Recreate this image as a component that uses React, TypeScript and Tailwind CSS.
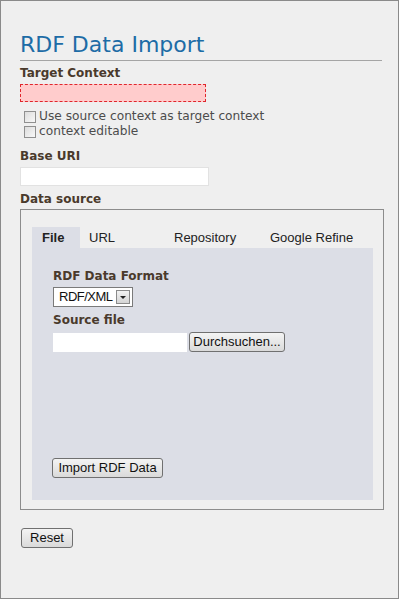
import React from 'react';

const label = 'text-[12px] leading-[15px] font-bold text-[#4a3a2c]';

function Checkbox({ text }: { text: string }) {
  return (
    <div className="flex h-[15px] items-center">
      <span className="ml-[4px] h-[12px] w-[12px] border border-[#8f8f8f] bg-gradient-to-br from-[#dcdcdc] to-[#f8f8f8]" />
      <span className="ml-[3px] text-[12.2px] leading-[15px] text-[#4c4c4c]">{text}</span>
    </div>
  );
}

function Button({ children, className = '' }: { children: React.ReactNode; className?: string }) {
  return (
    <div
      className={`flex h-[20px] items-center justify-center rounded-[3px] border border-[#707070] bg-gradient-to-b from-[#f4f4f4] to-[#dadada] font-['Liberation_Sans',Arial,sans-serif] text-[13px] text-[#111] ${className}`}
    >
      {children}
    </div>
  );
}

export default function App() {
  return (
    <div className="h-[600px] w-[400px] bg-white font-['DejaVu_Sans',Verdana,sans-serif]">
      <div className="h-[599px] w-[399px] border border-[#8a8a8a] bg-[#efefef] pl-[19px]">
        <div className="mt-[30px] w-[362px] border-b border-[#a5a5a5] pb-[1px] text-[22px] leading-[28px] text-[#1d6ca6]">
          RDF Data Import
        </div>

        <div className={`mt-[5px] ${label}`}>Target Context</div>
        <div className="mt-[3px] h-[18px] w-[186px] border border-dashed border-[#e0262c] bg-[#ffcccc]" />

        <div className="mt-[7px]">
          <Checkbox text="Use source context as target context" />
          <Checkbox text="context editable" />
        </div>

        <div className={`mt-[10px] ${label}`}>Base URI</div>
        <div className="mt-[3px] h-[19px] w-[189px] border border-[#e2e2e2] bg-white" />

        <div className={`mt-[6px] ${label}`}>Data source</div>
        <div className="mt-[2px] h-[301px] w-[364px] border border-[#8c8c8c] pl-[11px] pr-[10px] pt-[17px] pb-[9px]">
          <div className="flex h-[21px] items-center font-['Liberation_Sans',Arial,sans-serif] text-[13px] text-[#222]">
            <div className="flex h-full w-[48px] items-center bg-[#dcdee6] pl-[10px] font-bold">File</div>
            <div className="w-[85px] pl-[9px]">URL</div>
            <div className="w-[95px] pl-[9px]">Repository</div>
            <div className="pl-[10px]">Google Refine</div>
          </div>
          <div className="h-[252px] bg-[#dcdee6] pl-[21px] pt-[21px]">
            <div className={label}>RDF Data Format</div>
            <div className="mt-[3px] flex h-[20px] w-[80px] items-center border border-[#7a7a7a] bg-white pl-[5px] font-['Liberation_Sans',Arial,sans-serif] text-[13px] tracking-[-0.5px] text-[#111]">
              <span>RDF/XML</span>
              <span className="ml-auto mr-[2px] flex h-[14px] w-[14px] items-center justify-center border border-[#8a8a8a] bg-gradient-to-b from-[#f2f2f2] to-[#d4d4d4]">
                <span className="h-0 w-0 border-x-[3px] border-t-[3px] border-x-transparent border-t-[#222]" />
              </span>
            </div>
            <div className={`mt-[6px] ${label}`}>Source file</div>
            <div className="mt-[4px] flex items-center">
              <div className="h-[19px] w-[134px] bg-white" />
              <Button className="ml-[2px] w-[96px]">Durchsuchen...</Button>
            </div>
            <Button className="mt-[106px] -ml-[1px] w-[111px]">Import RDF Data</Button>
          </div>
        </div>

        <Button className="mt-[18px] ml-[1px] w-[52px]">Reset</Button>
      </div>
    </div>
  );
}
